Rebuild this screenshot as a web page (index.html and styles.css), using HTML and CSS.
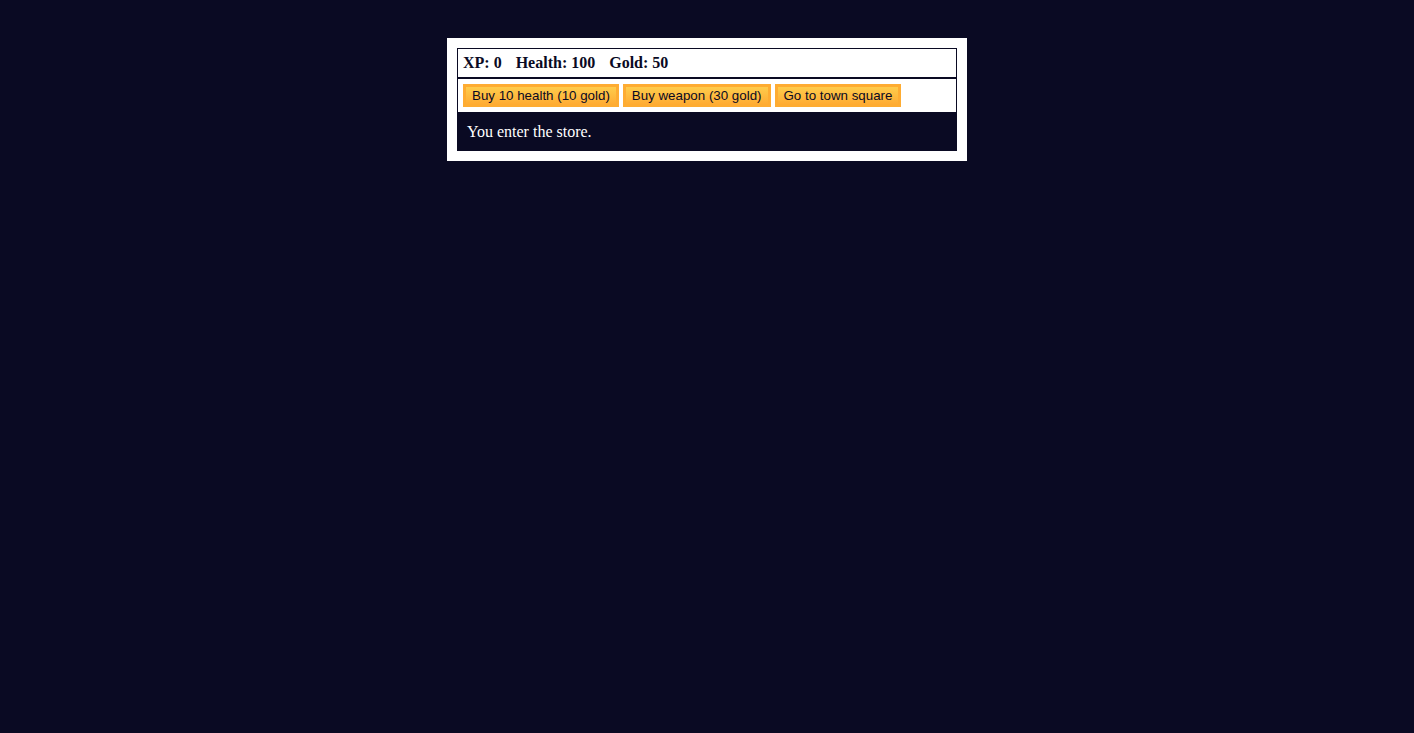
FILE: index.html
```html
<!DOCTYPE html>
<html>
<head>
<meta charset="utf-8">
<link rel="stylesheet" href="styles.css">
</head>
<body>
<div class="game">
  <div class="stats">
    <span class="stat">XP: <strong>0</strong></span>
    <span class="stat">Health: <strong>100</strong></span>
    <span class="stat">Gold: <strong>50</strong></span>
  </div>
  <div class="controls">
    <button class="btn">Buy 10 health (10 gold)</button>
    <button class="btn">Buy weapon (30 gold)</button>
    <button class="btn">Go to town square</button>
  </div>
  <div class="text">You enter the store.</div>
</div>
</body>
</html>
```
FILE: styles.css
```css
body {
  margin: 8px;
  background-color: #0a0a23;
  font-family: "Liberation Serif", "Times New Roman", serif;
  font-size: 16px;
}
.game {
  max-width: 500px;
  background-color: #ffffff;
  color: #ffffff;
  margin: 30px auto 0;
  padding: 10px;
}
.stats, .controls {
  border: 1px solid #0a0a23;
  padding: 5px;
  color: #0a0a23;
}
.stats {
  font-weight: bold;
}
.stat {
  padding-right: 10px;
}
.text {
  background-color: #0a0a23;
  color: #ffffff;
  padding: 10px;
}
.btn {
  cursor: pointer;
  font-family: "Liberation Sans", Arial, sans-serif;
  font-size: 13.333px;
  color: #0a0a23;
  background-color: #feac32;
  background-image: linear-gradient(#fecc4c, #ffac33);
  border: 3px solid #feac32;
  padding: 1px 6px;
  margin: 0;
}
```
